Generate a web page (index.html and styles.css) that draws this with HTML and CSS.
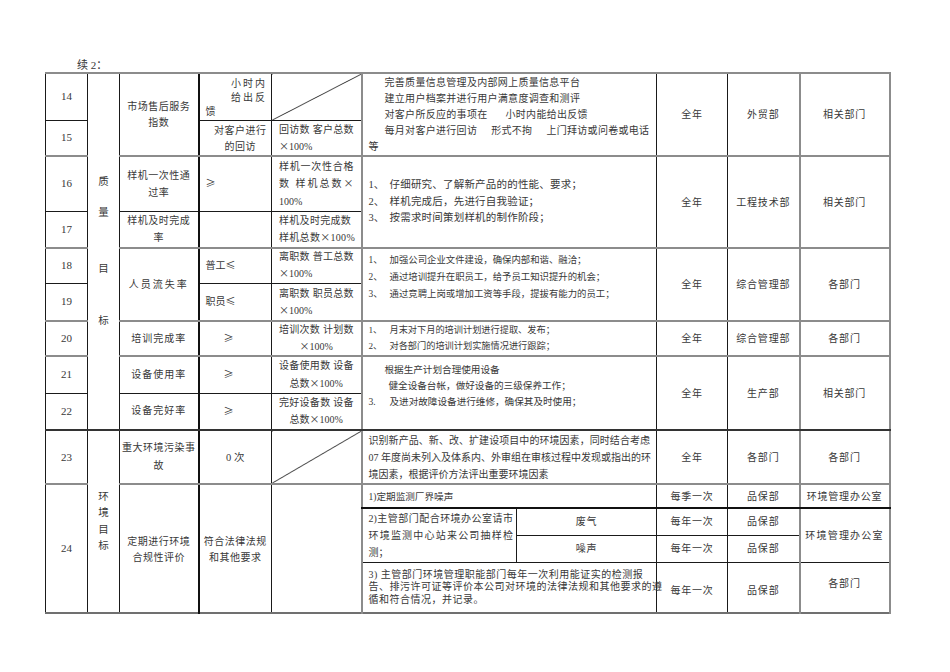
FILE: index.html
```html
<!DOCTYPE html>
<html lang="zh-CN">
<head>
<meta charset="utf-8">
<title>续 2</title>
<link rel="stylesheet" href="styles.css">
</head>
<body>
<div class="page">
  <div class="title">续 2：</div>
  <table class="sheet">
    <colgroup>
      <col class="w1"><col class="w2"><col class="w3"><col class="w4"><col class="w5">
      <col class="w6a"><col class="w6b"><col class="w7"><col class="w8"><col class="w9">
    </colgroup>
    <tr class="r14 g">
      <td class="n">14</td>
      <td class="cat" rowspan="9">
        <div class="catq"><span class="ch">质</span><span class="ch q2">量</span><span class="ch q3">目</span><span class="ch q4">标</span></div>
      </td>
      <td class="name" rowspan="2"><span class="ln">市场售后服务</span><span class="ln">指数</span></td>
      <td class="t14"><span class="ln ra">小时内</span><span class="ln ra">给出反</span><span class="ln la">馈</span></td>
      <td class="diag"></td>
      <td class="m m14" colspan="2" rowspan="2">
        <span class="ln in16">完善质量信息管理及内部网上质量信息平台</span>
        <span class="ln in16">建立用户档案并进行用户满意度调查和测评</span>
        <span class="ln in16">对客户所反应的事项在<span class="gap18"></span>小时内能给出反馈</span>
        <span class="ln in16">每月对客户进行回访<span class="gap14"></span>形式不拘<span class="gap14"></span>上门拜访或问卷或电话</span>
        <span class="ln">等</span>
      </td>
      <td class="rc" rowspan="2">全年</td>
      <td class="rc" rowspan="2">外贸部</td>
      <td class="rc" rowspan="2">相关部门</td>
    </tr>
    <tr class="r15">
      <td class="n">15</td>
      <td class="t15"><span class="ln">对客户进行</span><span class="ln">的回访</span></td>
      <td class="f"><span class="ln j">回访数 客户总数</span><span class="ln"><span class="x">×</span>100%</span></td>
    </tr>
    <tr class="r16 g">
      <td class="n">16</td>
      <td class="name"><span class="ln">样机一次性通</span><span class="ln">过率</span></td>
      <td class="ge"><span class="x">≥</span></td>
      <td class="f"><span class="ln j">样机一次性合格</span><span class="ln j">数 样机总数<span class="x">×</span></span><span class="ln">100%</span></td>
      <td class="m m16" colspan="2" rowspan="2">
        <span class="ln"><span class="no">1、</span>仔细研究、了解新产品的的性能、要求；</span>
        <span class="ln"><span class="no">2、</span>样机完成后，先进行自我验证；</span>
        <span class="ln"><span class="no">3、</span>按需求时间策划样机的制作阶段；</span>
      </td>
      <td class="rc" rowspan="2">全年</td>
      <td class="rc" rowspan="2">工程技术部</td>
      <td class="rc" rowspan="2">相关部门</td>
    </tr>
    <tr class="r17">
      <td class="n">17</td>
      <td class="name"><span class="ln">样机及时完成</span><span class="ln">率</span></td>
      <td></td>
      <td class="f ls"><span class="ln">样机及时完成数</span><span class="ln">样机总数<span class="x">×</span>100%</span></td>
    </tr>
    <tr class="r18 g">
      <td class="n">18</td>
      <td class="name wide" rowspan="2">人员流失率</td>
      <td class="ge">普工<span class="x">≤</span></td>
      <td class="f"><span class="ln j">离职数 普工总数</span><span class="ln"><span class="x">×</span>100%</span></td>
      <td class="m m18" colspan="2" rowspan="2">
        <span class="ln"><span class="no">1、</span>加强公司企业文件建设，确保内部和谐、融洽；</span>
        <span class="ln"><span class="no">2、</span>通过培训提升在职员工，给予员工知识提升的机会；</span>
        <span class="ln"><span class="no">3、</span>通过竞聘上岗或增加工资等手段，提拔有能力的员工；</span>
      </td>
      <td class="rc" rowspan="2">全年</td>
      <td class="rc" rowspan="2">综合管理部</td>
      <td class="rc" rowspan="2">各部门</td>
    </tr>
    <tr class="r19">
      <td class="n">19</td>
      <td class="ge">职员<span class="x">≤</span></td>
      <td class="f"><span class="ln j">离职数 职员总数</span><span class="ln"><span class="x">×</span>100%</span></td>
    </tr>
    <tr class="r20 g">
      <td class="n">20</td>
      <td class="name mid">培训完成率</td>
      <td class="ge2"><span class="x">≥</span></td>
      <td class="f"><span class="ln j">培训次数 计划数</span><span class="ln c"><span class="x">×</span>100%</span></td>
      <td class="m m20" colspan="2">
        <span class="ln"><span class="no">1、</span>月末对下月的培训计划进行提取、发布；</span>
        <span class="ln"><span class="no">2、</span>对各部门的培训计划实施情况进行跟踪；</span>
      </td>
      <td class="rc">全年</td>
      <td class="rc">综合管理部</td>
      <td class="rc">各部门</td>
    </tr>
    <tr class="r21 g">
      <td class="n">21</td>
      <td class="name mid">设备使用率</td>
      <td class="ge2"><span class="x">≥</span></td>
      <td class="f"><span class="ln j">设备使用数 设备</span><span class="ln c">总数<span class="x">×</span>100%</span></td>
      <td class="m m21" colspan="2" rowspan="2">
        <span class="ln in16">根据生产计划合理使用设备</span>
        <span class="ln in20">健全设备台帐，做好设备的三级保养工作；</span>
        <span class="ln"><span class="no">3.</span>及进对故障设备进行维修，确保其及时使用；</span>
      </td>
      <td class="rc" rowspan="2">全年</td>
      <td class="rc" rowspan="2">生产部</td>
      <td class="rc" rowspan="2">相关部门</td>
    </tr>
    <tr class="r22 k">
      <td class="n">22</td>
      <td class="name mid">设备完好率</td>
      <td class="ge2"><span class="x">≥</span></td>
      <td class="f"><span class="ln j">完好设备数 设备</span><span class="ln c">总数<span class="x">×</span>100%</span></td>
    </tr>
    <tr class="r23 kk">
      <td class="n">23</td>
      <td class="cat" rowspan="5">
        <div class="cate"><span class="ch">环</span><span class="ch">境</span><span class="ch">目</span><span class="ch">标</span></div>
      </td>
      <td class="name"><span class="ln">重大环境污染事</span><span class="ln">故</span></td>
      <td class="zero">0 次</td>
      <td class="diag"></td>
      <td class="m m23" colspan="2">
        <span class="ln j">识别新产品、新、改、扩建设项目中的环境因素，同时结合考虑</span>
        <span class="ln j">07 年度尚未列入及体系内、外审组在审核过程中发现或指出的环</span>
        <span class="ln">境因素，根据评价方法评出重要环境因素</span>
      </td>
      <td class="rc">全年</td>
      <td class="rc">各部门</td>
      <td class="rc">各部门</td>
    </tr>
    <tr class="r24a g">
      <td class="n" rowspan="4">24</td>
      <td class="name n24" rowspan="4"><span class="ln">定期进行环境</span><span class="ln">合规性评价</span></td>
      <td class="name n24" rowspan="4"><span class="ln">符合法律法规</span><span class="ln">和其他要求</span></td>
      <td rowspan="4"></td>
      <td class="m m24a" colspan="2">1)定期监测厂界噪声</td>
      <td class="rc">每季一次</td>
      <td class="rc">品保部</td>
      <td class="rc">环境管理办公室</td>
    </tr>
    <tr class="r24b kb">
      <td class="m m24b" rowspan="2">
        <span class="ln j">2)主管部门配合环境办公室请市</span>
        <span class="ln j">环境监测中心站来公司抽样检</span>
        <span class="ln">测；</span>
      </td>
      <td class="rc">废气</td>
      <td class="rc">每年一次</td>
      <td class="rc">品保部</td>
      <td class="rc sp" rowspan="2">环境管理办公室</td>
    </tr>
    <tr class="r24c">
      <td class="rc">噪声</td>
      <td class="rc">每年一次</td>
      <td class="rc">品保部</td>
    </tr>
    <tr class="r24d">
      <td class="m m24d" colspan="2">
        <span class="ln">3) 主管部门环境管理职能部门每年一次利用能证实的检测报</span>
        <span class="ln">告、排污许可证等评价本公司对环境的法律法规和其他要求的遵</span>
        <span class="ln">循和符合情况，并记录。</span>
      </td>
      <td class="rc low">每年一次</td>
      <td class="rc low">品保部</td>
      <td class="rc high">各部门</td>
    </tr>
  </table>
</div>
</body>
</html>
```
FILE: styles.css
```css
html, body {
  margin: 0;
  background: #ffffff;
}
body {
  font-family: "Liberation Serif", "Noto Sans CJK SC", serif;
  color: #383838;
}
.page {
  padding: 58px 0 0 45px;
}
.title {
  margin-left: 32px;
  font-size: 11px;
  line-height: 14px;
  height: 14px;
}
.sheet {
  border-collapse: collapse;
  table-layout: fixed;
  width: 844px;
  border-top: 2px solid #8c8c8c;
  border-bottom: 2px solid #707070;
  border-left: 1px solid #1a1a1a;
}
.w1 { width: 42px; }
.w2 { width: 32px; }
.w3 { width: 79px; border-left: 1px solid #444; }
.w4 { width: 73px; border-left: 2px solid #111; }
.w5 { width: 90px; }
.w6a { width: 155px; border-left: 2px solid #8c8c8c; }
.w6b { width: 140px; }
.w7 { width: 71px; }
.w8 { width: 72px; }
.w9 { width: 90px; border-left: 2px solid #8c8c8c; border-right: 2px solid #8c8c8c; }

.sheet td {
  border: 1px solid #1a1a1a;
  padding: 0;
  text-align: center;
  vertical-align: middle;
  font-size: 10px;
  line-height: 15px;
  white-space: nowrap;
}
.sheet tr.g { border-top: 2px solid #8c8c8c; }
.sheet tr.k { border-top: 1px solid #111; }
.sheet tr.kk { border-top: 2px solid #333; }
.sheet tr.kb { border-top: 2px solid #111; }

.r14 { height: 47px; }
.r15 { height: 36px; }
.r16 { height: 55px; }
.r17 { height: 37px; }
.r18 { height: 35px; }
.r19 { height: 38px; }
.r20 { height: 35px; }
.r21 { height: 37px; }
.r22 { height: 37px; }
.r23 { height: 54px; }
.r24a { height: 24px; }
.r24b { height: 27px; }
.r24c { height: 27px; }
.r24d { height: 51px; }

.ln { display: block; white-space: nowrap; }
.j { text-align: justify; text-align-last: justify; }
.c { text-align: center; }
.ra { text-align: right; }
.la { text-align: left; }
.x { font-family: "Noto Sans CJK SC", sans-serif; line-height: 0; }

.sheet td.n { font-size: 11px; }

.catq, .cate {
  display: flex;
  flex-direction: column;
  align-items: center;
}
.ch { display: block; font-size: 10.5px; line-height: 14px; }
.q2 { margin-top: 17px; }
.q3 { margin-top: 42px; }
.q4 { margin-top: 38px; }
.cate .ch { line-height: 16.5px; }

.sheet td.name { letter-spacing: 0.5px; line-height: 16px; }
.r16 td.name, .r17 td.name { line-height: 17px; }
.r23 td.name { line-height: 18px; }
.sheet td.wide { letter-spacing: 2px; }
.sheet td.mid { letter-spacing: 1px; }
.sheet td.n24 { line-height: 16.5px; padding-top: 3px; }

.sheet td.t14 {
  line-height: 14px;
  padding: 3px 4px 0 6px;
  letter-spacing: 2px;
}
.sheet td.t15 {
  line-height: 16px;
  padding: 2px 0 0 10px;
  letter-spacing: 0.5px;
}
.sheet td.ge { text-align: left; padding-left: 6px; }
.sheet td.ge2 { text-align: left; padding-left: 24px; }
.sheet td.zero { font-size: 10.5px; }

.diag {
  background: linear-gradient(to bottom right,
    transparent calc(50% - 0.8px),
    #222 50%,
    transparent calc(50% + 0.8px));
}

.sheet td.f {
  text-align: left;
  padding: 0 7px;
  line-height: 16.5px;
}
.r15 td.f, .r17 td.f, .r19 td.f { line-height: 17px; }
.r16 td.f, .r21 td.f, .r22 td.f { line-height: 17.5px; }
.sheet td.ls { letter-spacing: 0.3px; }

.sheet td.m {
  text-align: left;
  padding: 0 6px;
}
.in16 { padding-left: 16px; }
.in20 { padding-left: 20px; }
.no { display: inline-block; width: 21px; letter-spacing: 0; }
.gap18 { display: inline-block; width: 18px; }
.gap14 { display: inline-block; width: 14px; }

.sheet td.m14 { line-height: 16px; letter-spacing: 0.3px; padding-top: 1px; }
.sheet td.m16 { line-height: 16.5px; font-size: 10.5px; letter-spacing: 0.2px; }
.sheet td.m18 { vertical-align: top; padding-top: 3px; font-size: 9.4px; line-height: 17px; }
.sheet td.m20 { vertical-align: top; padding-top: 1px; font-size: 9.2px; line-height: 15.5px; }
.sheet td.m21 { vertical-align: top; padding-top: 5px; font-size: 9.6px; line-height: 16px; }
.sheet td.m23 { line-height: 17px; }
.sheet td.m24a { font-size: 9.6px; }
.sheet td.m24b { padding-right: 3px; line-height: 17px; }
.sheet td.m24d { line-height: 12.5px; letter-spacing: 0.5px; }

.sheet td.rc { letter-spacing: 0.8px; }
.sheet td.sp { letter-spacing: 1.2px; }
.sheet td.low { padding-top: 6px; }
.sheet td.high { padding-bottom: 8px; }
```
